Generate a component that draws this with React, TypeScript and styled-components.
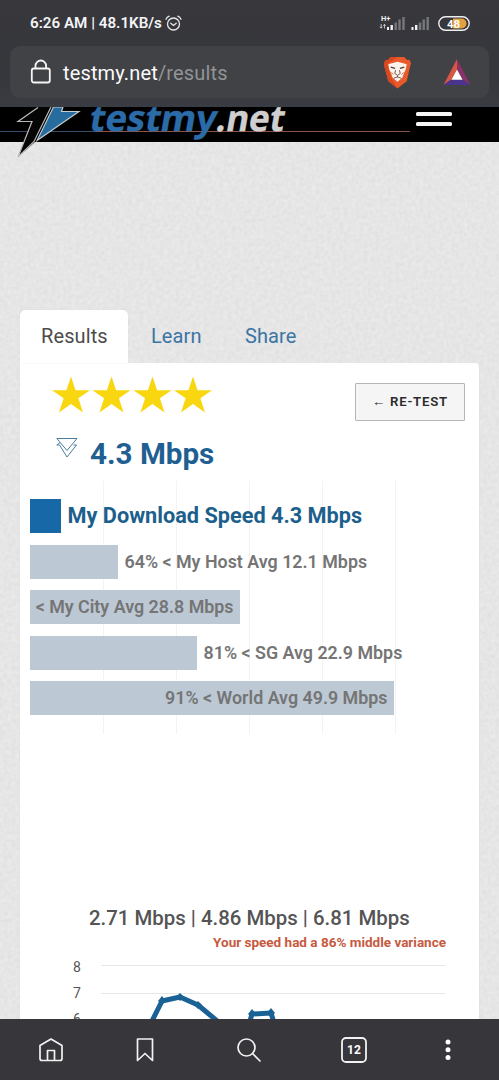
import React from "react";
import styled, { createGlobalStyle } from "styled-components";

const GlobalStyle = createGlobalStyle`
  *, *::before, *::after { box-sizing: border-box; }
  html, body { margin: 0; padding: 0; }
  body { font-family: Roboto, "Liberation Sans", sans-serif; background: #36373c; }
  svg { display: block; flex: none; }
`;

const Screen = styled.div`
  width: 499px;
  height: 1080px;
  display: flex;
  flex-direction: column;
  overflow: hidden;
`;

const BrowserTop = styled.header`
  height: 107px;
  flex: none;
  background: linear-gradient(#37373c, #36373c 70%, #3a3c43);
  color: #f4f4f6;
`;

const StatusBar = styled.div`
  height: 46px;
  display: flex;
  align-items: center;
  padding: 0 29px 0 30px;
`;

const StatusText = styled.span`
  font-size: 15.2px;
  font-weight: 600;
  white-space: pre;
  margin-right: 3px;
`;

const StatusIcons = styled.div`
  margin-left: auto;
  display: flex;
  align-items: center;
  gap: 5px;
`;

const AddressBar = styled.div`
  height: 52px;
  margin: 0 10px;
  padding: 0 18px 0 20px;
  border-radius: 10px;
  background: #404246;
  display: flex;
  align-items: center;
`;

const Url = styled.div`
  margin-left: 11px;
  padding-top: 1px;
  flex: 1;
  font-size: 20px;
  letter-spacing: 0.15px;
  color: #fafafa;
  span { color: #929497; }
`;

const AddressIcons = styled.div`
  display: flex;
  align-items: center;
  gap: 31px;
`;

const Page = styled.main`
  flex: 1;
  min-height: 0;
  overflow: hidden;
  position: relative;
  isolation: isolate;
  background: #e5e5e5;
`;

const PaperTexture = styled.svg`
  position: absolute;
  inset: 0;
  z-index: -1;
`;

const SiteHeader = styled.div`
  height: 35px;
  background: #000;
  display: flex;
  justify-content: space-between;
  padding-right: 47px;
`;

const Logo = styled.svg`
  overflow: visible;
`;

const MenuButton = styled.div`
  width: 36px;
  padding-top: 5px;
  display: flex;
  flex-direction: column;
  gap: 6px;
  &::before, &::after {
    content: "";
    height: 4px;
    border-radius: 1.5px;
    background: #f5f5f5;
  }
`;

const Tabs = styled.nav`
  display: flex;
  margin: 168px 20px 0;
  height: 53px;
`;

const Tab = styled.div<{ $active?: boolean }>`
  width: ${(p) => (p.$active ? 108 : 94)}px;
  padding-left: ${(p) => (p.$active ? 21 : 23)}px;
  line-height: 53px;
  font-size: 20px;
  letter-spacing: 0.1px;
  color: ${(p) => (p.$active ? "#4c4c4c" : "#3a74a3")};
  background: ${(p) => (p.$active ? "#fff" : "transparent")};
  border-radius: 5px 5px 0 0;
  box-shadow: ${(p) => (p.$active ? "0 0 1px #ccc" : "none")};
`;

const Card = styled.section`
  margin: 0 20px;
  height: 720px;
  background: #fff;
  border-radius: 0 4px 0 0;
  box-shadow: 0 1px 1px #ccc;
`;

const CardTop = styled.div`
  display: flex;
  justify-content: space-between;
  align-items: flex-start;
  height: 65px;
  padding: 13px 14px 0 31px;
`;

const Retest = styled.div`
  margin-top: 7px;
  width: 110px;
  height: 38px;
  border: 1px solid #b5b5b5;
  border-radius: 1px;
  background: #f5f5f5;
  color: #2b2b2b;
  font-size: 13.2px;
  font-weight: 600;
  letter-spacing: 0.8px;
  line-height: 35px;
  text-align: center;
  white-space: nowrap;
`;

const Speed = styled.div`
  display: flex;
  height: 53px;
  padding: 9px 0 0 36px;
  color: #1f5f92;
  font-size: 29.6px;
  font-weight: 700;
  line-height: 34px;
  span { margin-left: 12px; }
`;

const Bars = styled.div`
  margin-left: 10px;
  width: 440px;
  height: 253px;
  padding-top: 18px;
  display: flex;
  flex-direction: column;
  gap: 11.6px;
  background: repeating-linear-gradient(90deg, transparent 0 72px, #f3f3f3 72px 73px) 1px 0 / 366px 100% no-repeat;
`;

const BarRow = styled.div`
  display: flex;
  align-items: center;
  height: 34px;
`;

const Bar = styled.div<{ $main?: boolean }>`
  height: 34px;
  flex: none;
  display: flex;
  align-items: center;
  justify-content: flex-end;
  padding-right: 6.5px;
  background: ${(p) => (p.$main ? "#1668a6" : "#bcc8d4")};
`;

const BarLabel = styled.span<{ $main?: boolean; $outside?: boolean }>`
  font-size: ${(p) => (p.$main ? 21.7 : 17.85)}px;
  font-weight: ${(p) => (p.$main ? 700 : 600)};
  white-space: nowrap;
  color: ${(p) => (p.$main ? "#1d5f8c" : "#757575")};
  margin-left: ${(p) => (p.$outside ? 6.5 : 0)}px;
  padding-bottom: 1px;
`;

const Summary = styled.div`
  margin-top: 170px;
  padding-left: 69px;
  height: 28px;
  line-height: 28px;
  font-size: 20.4px;
  font-weight: 500;
  color: #545454;
  white-space: nowrap;
`;

const Variance = styled.div`
  padding-right: 33px;
  height: 20px;
  line-height: 20px;
  font-size: 13.5px;
  font-weight: 700;
  color: #c65a40;
  text-align: right;
`;

const LineChart = styled.div`
  display: flex;
  padding-left: 53px;
`;

const AxisLabels = styled.div`
  width: 27px;
  padding-top: 2px;
  font-size: 14px;
  line-height: 26px;
  color: #555;
`;

const BottomBar = styled.footer`
  height: 61px;
  flex: none;
  background: #36363b;
  display: grid;
  grid-template-columns: 102px 86px 122px 88px 100px;
  align-items: center;
  justify-items: center;
`;

type BarDatum = { label: string; width: number; inside?: boolean; main?: boolean };

const bars: BarDatum[] = [
  { label: "My Download Speed 4.3 Mbps", width: 31, main: true },
  { label: "64% < My Host Avg 12.1 Mbps", width: 88 },
  { label: "< My City Avg 28.8 Mbps", width: 210, inside: true },
  { label: "81% < SG Avg 22.9 Mbps", width: 167 },
  { label: "91% < World Avg 49.9 Mbps", width: 364, inside: true },
];

const AlarmIcon = () => (
  <svg width="17" height="17" viewBox="0 0 17 17" fill="none" stroke="#e9e9eb" strokeWidth="1.3" strokeLinecap="round">
    <circle cx="8.5" cy="9" r="6" />
    <path d="M5.8 8.2 8.5 10.4 11.2 8.2M1 4.2Q2 2 4.2 1.2M16 4.2Q15 2 12.8 1.2" />
  </svg>
);

const SignalIcons = () => (
  <svg width="56" height="18" viewBox="0 0 56 18">
    <text x="4" y="6.5" fontSize="7.5" fontWeight="700" fill="#eee">H+</text>
    <path d="M4.2 10v4M3 12.7l1.2 1.5 1.2-1.5M7.5 14.5v-4M6.3 11.8l1.2-1.5 1.2 1.5" stroke="#ddd" strokeWidth=".8" fill="none" />
    <g fill="#f2f2f2">
      <path d="M10 13h2v3h-2zM13.5 11h2.4V16h-2.4zM34.5 13h2v3h-2zM38 11h2.4V16H38z" />
    </g>
    <g fill="#77787c">
      <path d="M17.5 8.5h2.4v7.5h-2.4zM21.3 5.5h2.4V16h-2.4zM25.3 3h2.4v13h-2.4zM41.8 8.5h2.4v7.5h-2.4zM45.5 5.5h2.4V16h-2.4zM49.5 3h2.4v13h-2.4z" />
    </g>
  </svg>
);

const BatteryIcon = () => (
  <svg width="32" height="15" viewBox="0 0 32 15">
    <path d="M15 2.5h8.5a5 5 0 0 1 0 10H15z" fill="#e3a140" />
    <rect x=".8" y=".8" width="30.4" height="13.4" rx="6.7" fill="none" stroke="#eee" strokeWidth="1.4" />
    <text x="15.5" y="11.5" textAnchor="middle" fontSize="11.5" fontWeight="700" fill="#fff">48</text>
  </svg>
);

const LockIcon = () => (
  <svg width="22" height="26" viewBox="0 0 22 26" fill="none" stroke="#f5f5f5" strokeWidth="1.8">
    <rect x="1.8" y="9.5" width="18" height="14" rx="2" />
    <path d="M5.5 9.5V6.8a5.3 5.3 0 0 1 10.6 0v2.7" />
  </svg>
);

const BraveIcon = () => (
  <svg width="29" height="33" viewBox="0 0 30 34">
    <path d="M8 1h14l3 3 2.5-.2 1.5 4-1 3L24.5 26 15 33.5 5.5 26 1.5 11 1 8l1.5-4L5 4z" fill="#e85a2c" />
    <path d="M8 1h7L4.5 8 8 22l7 11.5L5.5 26 1.5 11 1 8l1.5-4L5 4z" fill="#d84720" />
    <path d="M9 7.5l6-1.5 6 1.5 3.5 1L23.5 14l-2 4-1.5 4.5-5 4-5-4L8.5 18l-2-4L5.5 8.500z" fill="#fbf3ec" />
    <path d="M8 11.5l4.5 1.2M22 11.5l-4.5 1.2" fill="none" stroke="#4d3c35" strokeWidth="1.2" />
    <path d="M13 14.5l-.8 3.5 2.8 2 2.8-2-.8-3.5M15 20v2M11 23l4-1.5 4 1.5" fill="none" stroke="#6f574c" strokeWidth="1" />
    <path d="M8.5 17l2.5 2M21.5 17L19 19" stroke="#e0744e" strokeWidth="1" />
  </svg>
);

const BatIcon = () => (
  <svg width="28" height="27" viewBox="0 0 28 28">
    <path d="M14 0v11L8.5 21 0 27z" fill="#da5640" />
    <path d="M14 0l14 27-8.5-6L14 11z" fill="#8b3068" />
    <path d="M0 27l8.5-6h11l8.5 6z" fill="#4b348e" />
    <path d="M14 11l5.8 10.5H8.2z" fill="#fff" />
  </svg>
);

const Stars = () => (
  <svg width="162" height="40" viewBox="0 0 162 40" fill="#f8d711">
    {[20, 60.5, 101.5, 142].map((x) => (
      <path key={x} transform={`translate(${x} 0)`} d="M0 0.5L4.6 14.2H19L7.4 22.3L12 36.5L0 28L-12 36.5L-7.4 22.3L-19 14.2H-4.6Z" />
    ))}
  </svg>
);

const DownArrows = () => (
  <svg width="22" height="22" viewBox="0 0 22 22" fill="none" stroke="#4c7d9e" strokeWidth="1">
    <path d="M.8 1.500H21L11 13.500zM4 5.500L.8 8H3.500L11 20 20.500 8H17.500" />
  </svg>
);

const SiteLogo = () => (
  <Logo width="412" height="51" viewBox="0 0 412 51">
    <path d="M0 24.5H96" stroke="#34506a" />
    <path d="M96 24.5H410" stroke="#8a5546" />
    <path d="M38 0L18 14.5H32L18 50L35 35L80 4.5L64 0z" fill="#050505" />
    <path d="M38 0.5L18 14.5H32L18 50L34 34.5L51 0" fill="none" stroke="#b9b9b9" strokeWidth="1.2" />
    <path d="M53.5 0H63L61.5 4.5H79L37 33.5z" fill="#276c9f" stroke="#c8cdd1" strokeWidth="1.1" />
    <g transform="translate(0 24) skewX(-10)" fontFamily="'Noto Sans', sans-serif" fontWeight="700" fontSize="36" strokeWidth=".4">
      <text x="88" y="0" fill="#2b6ca8" stroke="#2b6ca8" textLength="127" lengthAdjust="spacingAndGlyphs">testmy</text>
      <text x="215" y="0" fill="#cfcfcf" stroke="#cfcfcf" textLength="68" lengthAdjust="spacingAndGlyphs">.net</text>
    </g>
  </Logo>
);

const SpeedLine = () => (
  <svg width="346" height="70" viewBox="0 0 346 70" fill="none">
    <path d="M1 13.5H345M1 41.5H345" stroke="#e6e6e6" />
    <path d="M50 73L62 49L80 45L98 53L122 73M144 90L152 62L171 61L180 90" stroke="#1a6296" strokeWidth="5" strokeLinejoin="round" />
    <g fill="#1a6296">
      <path d="M62 44l4 5-4 4-4-4zM80 41l4 4-4 4-4-4zM98 49l4 4-4 4-4-4zM152 57l4 5-4 4-4-4zM171 56l4 5-4 4-4-4z" />
    </g>
  </svg>
);

const HomeIcon = () => (
  <svg width="28" height="28" viewBox="0 0 28 28" fill="none" stroke="#f2f2f2" strokeWidth="1.7" strokeLinejoin="round">
    <path d="M3 9.5L14 3L25 9.5V22.5Q25 24.5 23 24.5H5Q3 24.5 3 22.5Z" />
    <path d="M10.5 24.5V14.5H17.5V24.5" />
  </svg>
);

const BookmarkIcon = () => (
  <svg width="20" height="28" viewBox="0 0 20 28" fill="none" stroke="#f2f2f2" strokeWidth="1.7" strokeLinejoin="round">
    <path d="M2.5 3H17.5V24.5L10 17.5L2.5 24.5Z" />
  </svg>
);

const SearchIcon = () => (
  <svg width="26" height="28" viewBox="0 0 26 28" fill="none" stroke="#f2f2f2" strokeWidth="1.7" strokeLinecap="round">
    <circle cx="10.5" cy="11.5" r="8.5" />
    <path d="M16.5 17.5L24 25" />
  </svg>
);

const TabsIcon = () => (
  <svg width="28" height="28" viewBox="0 0 28 28">
    <rect x="2" y="2" width="24" height="24" rx="4" fill="none" stroke="#f2f2f2" strokeWidth="1.8" />
    <text x="14" y="18.3" textAnchor="middle" fontSize="12" fontWeight="700" fill="#fff">12</text>
  </svg>
);

const MoreIcon = () => (
  <svg width="6" height="24" viewBox="0 0 6 24" fill="#fff">
    <circle cx="3" cy="4" r="2.5" />
    <circle cx="3" cy="11.8" r="2.5" />
    <circle cx="3" cy="19.5" r="2.5" />
  </svg>
);

export default function App() {
  return (
    <>
      <GlobalStyle />
      <Screen>
        <BrowserTop>
          <StatusBar>
            <StatusText>6:26 AM | 48.1KB/s</StatusText>
            <AlarmIcon />
            <StatusIcons>
              <SignalIcons />
              <BatteryIcon />
            </StatusIcons>
          </StatusBar>
          <AddressBar>
            <LockIcon />
            <Url>testmy.net<span>/results</span></Url>
            <AddressIcons>
              <BraveIcon />
              <BatIcon />
            </AddressIcons>
          </AddressBar>
        </BrowserTop>
        <Page>
          <PaperTexture width="499" height="912" aria-hidden="true">
            <filter id="paper" colorInterpolationFilters="sRGB">
              <feTurbulence type="fractalNoise" baseFrequency="0.25" numOctaves="2" seed="4" />
              <feColorMatrix values="0.06 0 0 0 0.87  0.06 0 0 0 0.87  0.06 0 0 0 0.87  0 0 0 0 1" />
            </filter>
            <rect width="499" height="912" filter="url(#paper)" />
          </PaperTexture>
          <SiteHeader>
            <SiteLogo />
            <MenuButton />
          </SiteHeader>
          <Tabs>
            <Tab $active>Results</Tab>
            <Tab>Learn</Tab>
            <Tab>Share</Tab>
          </Tabs>
          <Card>
            <CardTop>
              <Stars />
              <Retest>← RE-TEST</Retest>
            </CardTop>
            <Speed>
              <DownArrows />
              <span>4.3 Mbps</span>
            </Speed>
            <Bars>
              {bars.map((b) => (
                <BarRow key={b.label}>
                  <Bar $main={b.main} style={{ width: b.width }}>
                    {b.inside && <BarLabel>{b.label}</BarLabel>}
                  </Bar>
                  {!b.inside && <BarLabel $outside $main={b.main}>{b.label}</BarLabel>}
                </BarRow>
              ))}
            </Bars>
            <Summary>2.71 Mbps | 4.86 Mbps | 6.81 Mbps</Summary>
            <Variance>Your speed had a 86% middle variance</Variance>
            <LineChart>
              <AxisLabels>
                <div>8</div>
                <div>7</div>
                <div>6</div>
              </AxisLabels>
              <SpeedLine />
            </LineChart>
          </Card>
        </Page>
        <BottomBar>
          <HomeIcon />
          <BookmarkIcon />
          <SearchIcon />
          <TabsIcon />
          <MoreIcon />
        </BottomBar>
      </Screen>
    </>
  );
}
